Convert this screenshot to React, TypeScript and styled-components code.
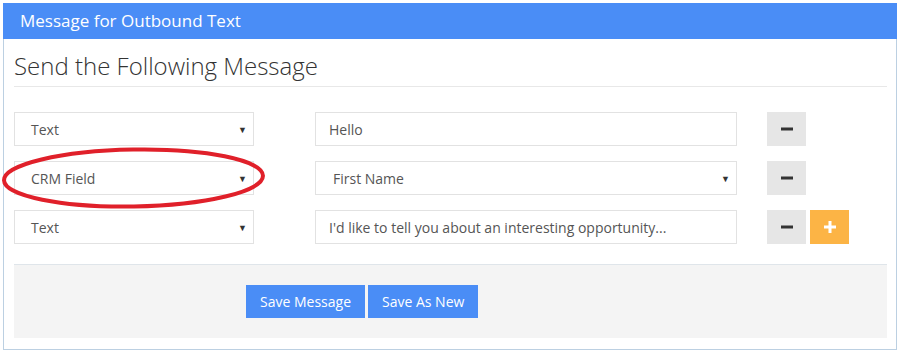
import styled, { createGlobalStyle } from "styled-components";

const GlobalStyle = createGlobalStyle`
  body {
    margin: 0;
    padding: 3px;
    background: #ffffff;
    font-family: "Open Sans", "Liberation Sans", sans-serif;
    color: #555555;
  }
`;

const PanelEl = styled.div`
  width: 894px;
  border: 1px solid #bcd0e2;
  border-top: none;
  background: #ffffff;
  box-sizing: border-box;
  height: 347px;
  display: flex;
  flex-direction: column;
`;

const HeaderEl = styled.div`
  height: 36px;
  background: #4a8df6;
  color: #ffffff;
  font-size: 17px;
  line-height: 36px;
  padding-left: 17px;
  margin-right: -1px;
  margin-left: -1px;
`;

const BodyEl = styled.div`
  position: relative;
  padding: 0 9px 0 10px;
`;

const TitleEl = styled.h2`
  margin: 0;
  padding: 13px 0 6px;
  font-size: 24px;
  font-weight: 300;
  color: #333333;
  line-height: 28px;
  border-bottom: 1px solid #e8e8e8;
`;

const RowsEl = styled.div`
  display: flex;
  flex-direction: column;
  gap: 15px;
  padding: 25px 0 20px;
`;

const RowEl = styled.div`
  display: flex;
  align-items: center;
  height: 34px;
`;

const FieldEl = styled.div<{ $w: number; $gap: number; $pad?: number }>`
  width: ${(p) => p.$w}px;
  margin-right: ${(p) => p.$gap}px;
  height: 34px;
  box-sizing: border-box;
  border: 1px solid #e2e2e2;
  padding: 0 6px 0 ${(p) => p.$pad ?? 16}px;
  display: flex;
  align-items: center;
  justify-content: space-between;
  font-size: 14px;
  color: #555555;
  white-space: nowrap;
`;

const ArrowEl = styled.span`
  font-size: 9px;
  color: #333333;
`;

const IconBtnEl = styled.button<{ $variant?: "add" }>`
  width: 39px;
  height: 34px;
  border: none;
  margin-right: 4px;
  padding: 0;
  background: ${(p) => (p.$variant === "add" ? "#fcb445" : "#e6e6e6")};
  color: ${(p) => (p.$variant === "add" ? "#ffffff" : "#333333")};
  display: flex;
  align-items: center;
  justify-content: center;
`;

const FooterEl = styled.div`
  background: #f4f4f4;
  border-top: 1px solid #dfe5ea;
  padding: 20px 0 20px 232px;
  display: flex;
  gap: 3px;
`;

const SaveBtnEl = styled.button`
  height: 33px;
  border: none;
  background: #4a8df6;
  color: #ffffff;
  font-family: "Open Sans", "Liberation Sans", sans-serif;
  font-size: 14px;
  padding: 0 14px;
`;

// hand-drawn highlight over the CRM Field row
const MarkEl = styled.svg`
  position: absolute;
  left: -3px;
  top: 106px;
  pointer-events: none;
`;

const MinusIcon = () => (
  <svg width="12" height="12" viewBox="0 0 12 12">
    <rect x="0" y="4.5" width="12" height="3" fill="currentColor" />
  </svg>
);

const PlusIcon = () => (
  <svg width="12" height="12" viewBox="0 0 12 12">
    <rect x="0" y="4.5" width="12" height="3" fill="currentColor" />
    <rect x="4.5" y="0" width="3" height="12" fill="currentColor" />
  </svg>
);

const rows = [
  { type: "Text", value: "Hello", select: false, add: false },
  { type: "CRM Field", value: "First Name", select: true, add: false },
  {
    type: "Text",
    value: "I'd like to tell you about an interesting opportunity...",
    select: false,
    add: true,
  },
];

export default function App() {
  return (
    <>
      <GlobalStyle />
      <PanelEl>
        <HeaderEl>Message for Outbound Text</HeaderEl>
        <BodyEl>
          <TitleEl>Send the Following Message</TitleEl>
          <RowsEl>
            {rows.map((r, i) => (
              <RowEl key={i}>
                <FieldEl $w={240} $gap={61}>
                  <span>{r.type}</span>
                  <ArrowEl>▼</ArrowEl>
                </FieldEl>
                <FieldEl $w={422} $gap={30} $pad={r.select ? 17 : 13}>
                  <span>{r.value}</span>
                  {r.select && <ArrowEl>▼</ArrowEl>}
                </FieldEl>
                <IconBtnEl>
                  <MinusIcon />
                </IconBtnEl>
                {r.add && (
                  <IconBtnEl $variant="add">
                    <PlusIcon />
                  </IconBtnEl>
                )}
              </RowEl>
            ))}
          </RowsEl>
          <FooterEl>
            <SaveBtnEl>Save Message</SaveBtnEl>
            <SaveBtnEl>Save As New</SaveBtnEl>
          </FooterEl>
          <MarkEl width="270" height="66" viewBox="0 0 270 66">
            <ellipse
              cx="132.5"
              cy="33"
              rx="129.5"
              ry="28.5"
              fill="none"
              stroke="#e0202a"
              strokeWidth="4"
              transform="rotate(-1 132.5 33)"
            />
          </MarkEl>
        </BodyEl>
      </PanelEl>
    </>
  );
}
